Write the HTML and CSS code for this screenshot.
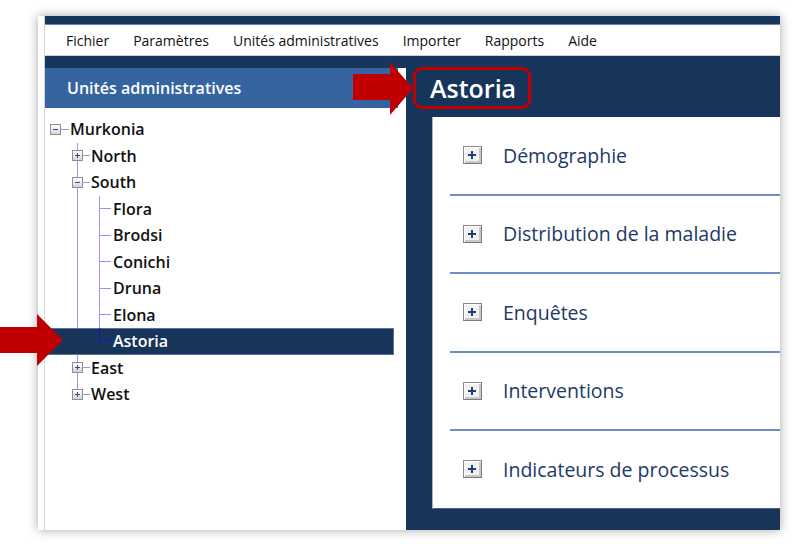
FILE: index.html
```html
<!DOCTYPE html>
<html lang="fr">
<head>
<meta charset="utf-8">
<title>Unités administratives</title>
<link rel="stylesheet" href="styles.css">
</head>
<body>
<div class="page">
  <div class="window">
    <div class="inner">
      <div class="topbar"></div>
      <nav class="menubar">
        <span class="menu-item">Fichier</span>
        <span class="menu-item">Paramètres</span>
        <span class="menu-item">Unités administratives</span>
        <span class="menu-item">Importer</span>
        <span class="menu-item">Rapports</span>
        <span class="menu-item">Aide</span>
      </nav>
      <div class="strip"></div>
      <div class="main">
        <aside class="left">
          <div class="left-head">Unités administratives</div>
          <div class="tree">
            <div class="node lvl0"><span class="tbox minus"></span><span class="conn"></span><span class="label">Murkonia</span></div>
            <div class="group g1">
              <div class="node lvl1"><span class="tbox plus"></span><span class="conn"></span><span class="label">North</span></div>
              <div class="node lvl1"><span class="tbox minus"></span><span class="conn"></span><span class="label">South</span></div>
              <div class="group g2">
                <div class="node lvl2"><span class="conn"></span><span class="label">Flora</span></div>
                <div class="node lvl2"><span class="conn"></span><span class="label">Brodsi</span></div>
                <div class="node lvl2"><span class="conn"></span><span class="label">Conichi</span></div>
                <div class="node lvl2"><span class="conn"></span><span class="label">Druna</span></div>
                <div class="node lvl2"><span class="conn"></span><span class="label">Elona</span></div>
                <div class="node lvl2 selected"><span class="conn"></span><span class="label">Astoria</span></div>
              </div>
              <div class="node lvl1"><span class="tbox plus"></span><span class="conn"></span><span class="label">East</span></div>
              <div class="node lvl1"><span class="tbox plus"></span><span class="conn"></span><span class="label">West</span></div>
            </div>
          </div>
        </aside>
        <section class="right">
          <h1 class="title">Astoria</h1>
          <div class="card">
            <div class="sec"><span class="pbox"></span><span class="sec-label">Démographie</span></div>
            <div class="sec"><span class="pbox"></span><span class="sec-label">Distribution de la maladie</span></div>
            <div class="sec"><span class="pbox"></span><span class="sec-label">Enquêtes</span></div>
            <div class="sec"><span class="pbox"></span><span class="sec-label">Interventions</span></div>
            <div class="sec last"><span class="pbox"></span><span class="sec-label">Indicateurs de processus</span></div>
          </div>
        </section>
      </div>
    </div>
  </div>
  <svg class="arrow arrow-top" width="60" height="53" viewBox="0 0 60 53"><polygon points="0,12 37,12 37,0 60,26.5 37,53 37,38 0,38"/></svg>
  <svg class="arrow arrow-left" width="63" height="52" viewBox="0 0 63 52"><polygon points="0,13 37,13 37,0 63,26 37,52 37,39 0,39"/></svg>
</div>
</body>
</html>
```
FILE: styles.css
```css
html, body {
  margin: 0;
  padding: 0;
  background: #ffffff;
}

body {
  font-family: "Open Sans", "Noto Sans", "Liberation Sans", sans-serif;
  color: #000;
}

.page {
  position: relative;
  width: 798px;
  height: 547px;
  overflow: hidden;
  padding: 16px 0 0 38px;
  box-sizing: border-box;
}

.window {
  width: 742px;
  height: 514px;
  background: #ffffff;
  box-shadow: 0 0 10px rgba(0, 0, 0, 0.35);
  padding-left: 6px;
  box-sizing: border-box;
}

.inner {
  height: 100%;
  border-left: 1px solid #d2d2d2;
  display: flex;
  flex-direction: column;
}

.topbar {
  height: 8px;
  background: #18365c;
  border-bottom: 1px solid #6f84a3;
}

.menubar {
  height: 30px;
  display: flex;
  align-items: center;
  gap: 24px;
  padding-left: 21px;
  font-size: 14px;
  color: #111;
  border-bottom: 1px solid #c9d1dc;
}

.strip {
  height: 12px;
  background: #18365c;
}

.main {
  flex: 1;
  display: flex;
  min-height: 0;
}

.left {
  width: 361px;
  flex: none;
  background: #ffffff;
}

.left-head {
  height: 40px;
  margin-right: 8px;
  background: #3564a0;
  color: #ffffff;
  font-size: 16px;
  font-weight: 600;
  padding-left: 22px;
  display: flex;
  align-items: center;
}

.tree {
  padding-top: 8px;
  font-size: 16px;
  font-weight: 600;
  color: #111;
}

.group {
  position: relative;
}

.group::before {
  content: "";
  position: absolute;
  top: 0;
  bottom: 13.25px;
  width: 1px;
  background: #9494ff;
}

.g1::before { left: 32px; }
.g2::before { left: 54px; }

.node {
  height: 26.5px;
  display: flex;
  align-items: center;
  box-sizing: border-box;
  margin-right: 12px;
  position: relative;
}

.lvl0 { padding-left: 5px; }
.lvl1 { padding-left: 27px; }
.lvl2 { padding-left: 54px; }

.tbox {
  position: relative;
  z-index: 1;
  width: 11px;
  height: 11px;
  box-sizing: border-box;
  border: 1px solid #8e8e8e;
  background: linear-gradient(#ffffff, #d4d4d4);
  flex: none;
}

.tbox::before,
.tbox::after {
  content: "";
  position: absolute;
  background: #3a4f80;
}

.tbox::before {
  left: 2px;
  top: 4px;
  width: 5px;
  height: 1px;
}

.tbox.plus::after {
  left: 4px;
  top: 2px;
  width: 1px;
  height: 5px;
}

.conn {
  height: 1px;
  background: #9494ff;
  flex: none;
}

.lvl0 .conn { width: 8px; }
.lvl1 .conn { width: 7px; }
.lvl2 .conn { width: 12px; }

.label {
  margin-left: 1px;
  line-height: 1;
}

.lvl2 .label { margin-left: 2px; }

.node.selected {
  margin-left: 2px;
  padding-left: 52px;
  background: #17355b;
  color: #ffffff;
  outline: 1px solid #5d7396;
  outline-offset: -1px;
}

.node.selected .conn {
  position: relative;
  z-index: 2;
  align-self: flex-start;
  height: 13.25px;
  width: 12px;
  box-sizing: border-box;
  background: transparent;
  border-left: 1px solid #1414d0;
  border-bottom: 1px solid #1414d0;
}

.right {
  flex: 1;
  background: #17355b;
  display: flex;
  flex-direction: column;
  padding-bottom: 22px;
  min-width: 0;
}

.title {
  align-self: flex-start;
  margin: -1px 0 0 7px;
  height: 42px;
  width: 118px;
  box-sizing: border-box;
  border: 3px solid #c00000;
  border-radius: 9px;
  padding: 0 0 0 14px;
  color: #ffffff;
  font-size: 25px;
  font-weight: 600;
  line-height: 36px;
}

.card {
  flex: 1;
  margin: 8px 0 0 26px;
  background: #ffffff;
  border-left: 1px solid #a7b0bd;
  border-bottom: 1px solid #4c5f7c;
  box-sizing: border-box;
}

.sec {
  height: 78.5px;
  box-sizing: border-box;
  margin-left: 17px;
  padding-left: 13px;
  border-bottom: 2px solid #6d8ec5;
  display: flex;
  align-items: center;
}

.sec.last {
  border-bottom: none;
  height: 76.5px;
}

.pbox {
  position: relative;
  width: 19px;
  height: 18px;
  box-sizing: border-box;
  border: 1px solid #8a8a8a;
  border-right-color: #7a7a7a;
  border-bottom-color: #7a7a7a;
  box-shadow: inset 1px 1px 0 #ffffff, inset -2px -2px 0 #c8c8c8;
  background: #f2f2f2;
  flex: none;
}

.pbox::before,
.pbox::after {
  content: "";
  position: absolute;
  background: #1f3f7a;
}

.pbox::before {
  left: 4px;
  top: 7px;
  width: 8px;
  height: 2px;
}

.pbox::after {
  left: 7px;
  top: 4px;
  width: 2px;
  height: 8px;
}

.sec-label {
  margin-left: 21px;
  font-size: 19.5px;
  color: #1c3a66;
}

.arrow {
  position: absolute;
  fill: #c00000;
}

.arrow-top {
  left: 353px;
  top: 62px;
}

.arrow-left {
  left: 0;
  top: 314px;
}
```
